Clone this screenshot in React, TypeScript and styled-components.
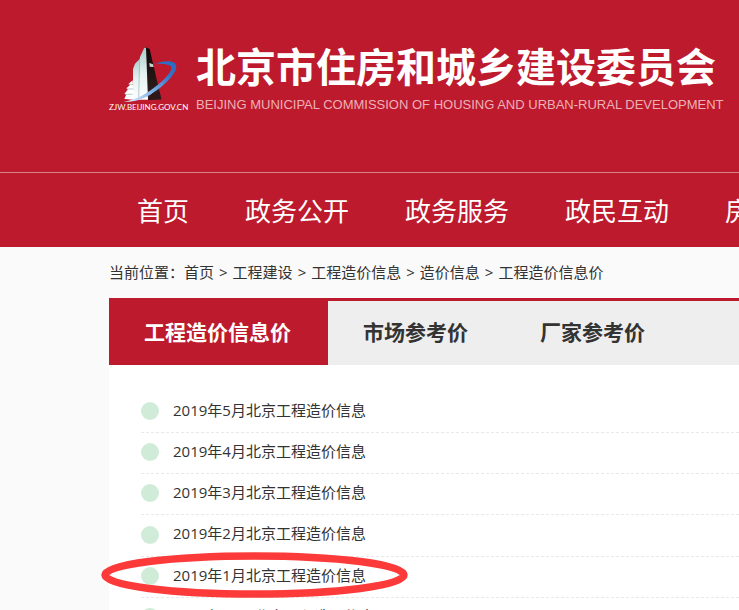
import React from 'react';
import styled, { createGlobalStyle } from 'styled-components';

const RED = '#bd1a2d';
const SANS = '"Open Sans", "Noto Sans CJK SC", sans-serif';

const GlobalStyle = createGlobalStyle`
  *, *::before, *::after { box-sizing: border-box; }
  body {
    margin: 0;
    background: #fafafa;
    color: #333;
    font-family: ${SANS};
    font-size: 15px;
  }
  a { color: inherit; text-decoration: none; }
  ul, ol { list-style: none; margin: 0; padding: 0; }
`;

const Page = styled.div`
  height: 100vh;
  overflow: hidden;
  white-space: nowrap;
`;

const Banner = styled.header`
  background: ${RED};
  color: #fff;
`;

const Brand = styled.a`
  display: flex;
  gap: 11px;
  height: 173px;
  padding: 45px 0 0 109px;
  border-bottom: 1px solid #d8828c;
`;

const Emblem = styled.span`
  display: flex;
  flex-direction: column;
  width: 76px;
  flex: none;

  svg { display: block; width: 76px; height: 57px; }
`;

const SiteAddress = styled.span`
  font: 8px/10px Lato, sans-serif;
`;

const Titles = styled.div`
  display: flex;
  flex-direction: column;
`;

const Title = styled.h1`
  margin: 0;
  font-size: 40px;
  line-height: 40px;
  font-weight: 700;
  font-family: "Noto Sans CJK SC", sans-serif;
`;

const Subtitle = styled.span`
  margin-top: 12px;
  font: 13px/16px "Liberation Sans", sans-serif;
  color: #eeb0b8;
`;

const MainNav = styled.nav`
  display: flex;
  gap: 56px;
  height: 74px;
  align-items: center;
  padding: 2px 0 0 137px;
  font-size: 26px;
  line-height: 36px;
`;

const NavLink = styled.a`
  flex: none;
`;

const Content = styled.main`
  margin-left: 109px;
`;

const Breadcrumb = styled.nav`
  display: flex;
  align-items: center;
  height: 51px;
  padding-bottom: 2px;
`;

const Separator = styled.span`
  padding: 0 5px;
`;

const Tabs = styled.div`
  display: flex;
  height: 67px;
  border-top: 3px solid ${RED};
  background: #eee;
`;

const Tab = styled.button<{ $active?: boolean }>`
  border: 0;
  padding: 0 37px 2px 35px;
  font: 700 21px/30px ${SANS};
  color: ${p => (p.$active ? '#fff' : '#333')};
  background: ${p => (p.$active ? RED : 'transparent')};
`;

const List = styled.ul`
  padding: 27px 0 0 32px;
  background: #fff;
`;

const Item = styled.li`
  position: relative;
  display: flex;
  align-items: center;
  gap: 14px;
  height: 41px;
  padding-bottom: 2px;
  border-bottom: 1px dashed #e9e9e9;

  &:nth-child(4n) {
    height: 42px;
  }

  &::before {
    content: '';
    width: 18px;
    height: 18px;
    border-radius: 50%;
    background: #d0ecd9;
  }
`;

const ReportLink = styled.a`
  padding-bottom: 4px;
`;

const Ring = styled.svg`
  position: absolute;
  left: -40px;
  top: -5px;
  width: 307px;
  height: 46px;
  pointer-events: none;
`;

const navItems = ['首页', '政务公开', '政务服务', '政民互动', '房屋管理'];
const crumbs = ['首页', '工程建设', '工程造价信息', '造价信息', '工程造价信息价'];
const tabs = ['工程造价信息价', '市场参考价', '厂家参考价'];
const reports = [
  { month: '2019年5月' },
  { month: '2019年4月' },
  { month: '2019年3月' },
  { month: '2019年2月' },
  { month: '2019年1月', marked: true },
  { month: '2018年12月' },
];

function TowerMark() {
  return (
    <svg viewBox="27 30 228 171" aria-hidden="true">
      <defs>
        <linearGradient id="stone" x1="0" y1="0" x2="0" y2="1">
          <stop offset="0" stopColor="#a9cbc9" />
          <stop offset="0.5" stopColor="#e3f1f0" />
          <stop offset="1" stopColor="#ffffff" />
        </linearGradient>
        <linearGradient id="dark" x1="0" y1="0" x2="0" y2="1">
          <stop offset="0" stopColor="#0d0708" />
          <stop offset="1" stopColor="#35201f" />
        </linearGradient>
        <linearGradient id="swoosh" x1="0" y1="1" x2="1" y2="0">
          <stop offset="0" stopColor="#e9f3ff" />
          <stop offset="0.4" stopColor="#7eb0e8" />
          <stop offset="0.75" stopColor="#3475c8" />
          <stop offset="1" stopColor="#276abd" />
        </linearGradient>
      </defs>
      <path d="M134 36 L149 42 L184 193 L142 195 L138 70 Z" fill="url(#dark)" />
      <path d="M148 84 L159 88 L161 96 L149 95 Z" fill="#c4d3d2" />
      <path d="M133 38 L138 38 L144 194 L114 194 L120 66 Z" fill="url(#stone)" />
      <path d="M120 68 L117 194 L99 194 L99 102 L105 86 L119 72 Z" fill="url(#stone)" />
      <path d="M98 136 L101 194 L73 192 L79 178 L73 177 L84 163 L79 160 L91 149 L86 146 Z" fill="#fff" />
      <path d="M119 72 L116 190 M86 148 L100 148 M81 162 L100 162 M76 178 L98 178" stroke="#a9bfc1" strokeWidth="2.5" fill="none" />
      <path d="M168 86 C197 76 227 75 229 94 C230 118 188 157 151 179 C125 193 101 202 70 200 C107 194 130 181 154 164 C185 143 219 110 214 96 C210 87 188 86 168 86 Z" fill="url(#swoosh)" />
      <path d="M158 174 L179 170 L184 193 L144 195 Z" fill="#2d1718" />
    </svg>
  );
}

export default function App() {
  return (
    <>
      <GlobalStyle />
      <Page>
        <Banner>
          <Brand href="#">
            <Emblem>
              <TowerMark />
              <SiteAddress>ZJW.BEIJING.GOV.CN</SiteAddress>
            </Emblem>
            <Titles>
              <Title>北京市住房和城乡建设委员会</Title>
              <Subtitle>BEIJING MUNICIPAL COMMISSION OF HOUSING AND URBAN-RURAL DEVELOPMENT</Subtitle>
            </Titles>
          </Brand>
          <MainNav>
            {navItems.map(label => (
              <NavLink href="#" key={label}>{label}</NavLink>
            ))}
          </MainNav>
        </Banner>
        <Content>
          <Breadcrumb>
            <span>当前位置：</span>
            {crumbs.map((label, i) => (
              <React.Fragment key={label}>
                {i > 0 && <Separator>&gt;</Separator>}
                <a href="#">{label}</a>
              </React.Fragment>
            ))}
          </Breadcrumb>
          <Tabs role="tablist">
            {tabs.map((label, i) => (
              <Tab type="button" role="tab" aria-selected={i === 0} $active={i === 0} key={label}>{label}</Tab>
            ))}
          </Tabs>
          <List>
            {reports.map(({ month, marked }) => (
              <Item key={month}>
                <ReportLink href="#">{month}北京工程造价信息</ReportLink>
                {marked && (
                  <Ring viewBox="0 0 307 46" aria-hidden="true">
                    <ellipse cx="153.5" cy="23" rx="149.5" ry="19" fill="none" stroke="#fc3a3a" strokeWidth="7.5" />
                  </Ring>
                )}
              </Item>
            ))}
          </List>
        </Content>
      </Page>
    </>
  );
}
